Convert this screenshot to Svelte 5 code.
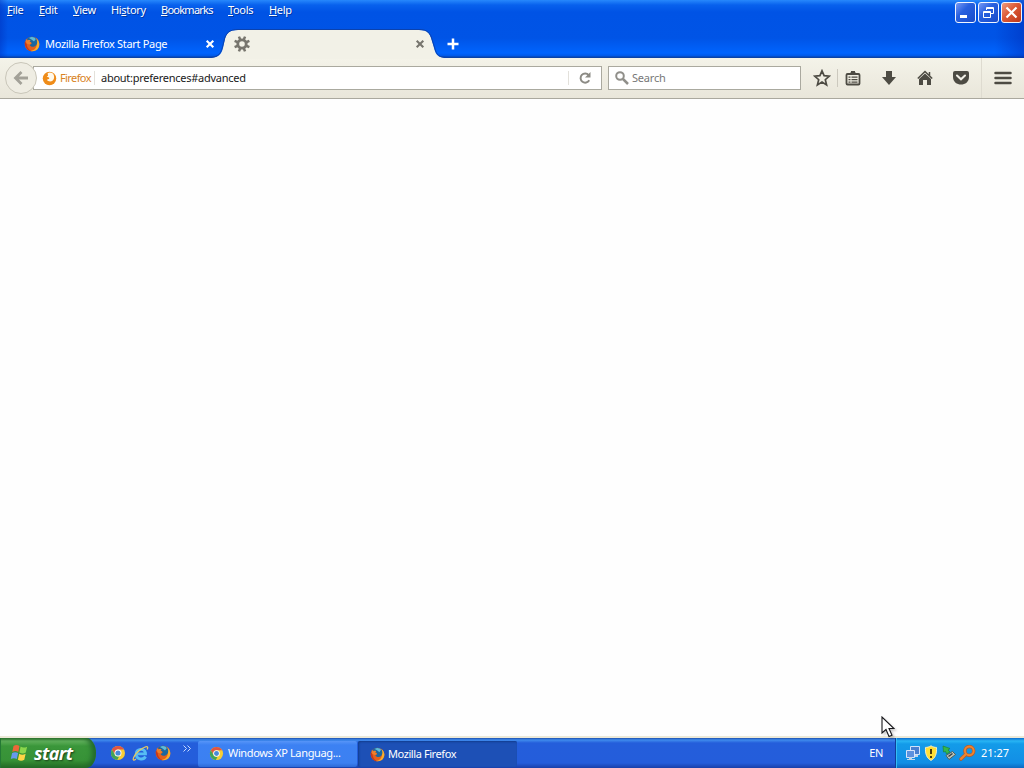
<script lang="ts">
	const menus = [
		{ before: '', key: 'F', after: 'ile', width: 32 },
		{ before: '', key: 'E', after: 'dit', width: 34 },
		{ before: '', key: 'V', after: 'iew', width: 38 },
		{ before: 'Hi', key: 's', after: 'tory', width: 50 },
		{ before: '', key: 'B', after: 'ookmarks', width: 67 },
		{ before: '', key: 'T', after: 'ools', width: 41 },
		{ before: '', key: 'H', after: 'elp', width: 40 }
	];

	let url = $state('about:preferences#advanced');
	let search = $state('');
</script>

{#snippet firefox(size: number)}
	<svg class="icon" width={size} height={size} viewBox="0 0 16 16">
		<circle cx="8" cy="8" r="7.3" fill="#e4601c" />
		<path d="M12 2.2c4.5 3 4.300 9.500.2 12-2.200 1.300-4.500 1.300-6 .8 4-.4 6.300-3 6.600-6.500z" fill="#f8ae2c" />
		<path d="M.8 6C.5 11 3.500 14.800 7.500 15.300 4.500 13.500 2.500 11 2.600 7z" fill="#c5371d" />
		<path d="M3 2.800C6-.2 11 .2 12.600 3.500c1.300 3 .4 6-2.200 7-2.200.8-4-.1-4.700-1.600l2-1.200L7 6 4 5.500z" fill="#1b679f" />
		<path d="M5 2C7.500.3 10.500 1 11.800 3L10 5.500 7.500 3.500z" fill="#5fbad8" />
		<path d="m1.800 3 1.500 1.500c1-.7 2.500-.5 3.300 0L5.500 6c1.500 0 2 .9 1.200 1.600l-1.300.9-3-1z" fill="#ef802a" />
	</svg>
{/snippet}

{#snippet chrome(size: number)}
	<svg class="icon" width={size} height={size} viewBox="0 0 16 16">
		<circle cx="8" cy="8" r="7" fill="#f5ce35" />
		<path d="M1.9 4.500A7 7 0 0 1 14.100 4.500H8a3.500 3.500 0 0 0-3.100 5z" fill="#df5545" />
		<path d="M1.900 4.500 5 9.800a3.500 3.500 0 0 0 4.200 1.500L7.300 15A7 7 0 0 1 1.900 4.500z" fill="#42a35b" />
		<circle cx="8" cy="8" r="3.500" fill="#fff" />
		<circle cx="8" cy="8" r="2.600" fill="#4a8ad8" />
	</svg>
{/snippet}

{#snippet cross()}
	<svg class="icon" width="10" height="10" viewBox="0 0 10 10">
		<path d="m1.700 1.700 6.600 6.600m0-6.600-6.600 6.600" fill="none" stroke="currentColor" stroke-width="2.100" />
	</svg>
{/snippet}

<div class="desktop">
	<header class="titlebar">
		<div class="top-row">
			<nav>
				{#each menus as menu}
					<span class="menu" style="width: {menu.width}px">{menu.before}<u>{menu.key}</u>{menu.after}</span>
				{/each}
			</nav>
			<div class="window-controls">
				<button aria-label="Minimize">
					<svg width="19" height="19" viewBox="0 0 19 19"><path d="M4 13.500h7" stroke="#fff" stroke-width="3" /></svg>
				</button>
				<button aria-label="Restore">
					<svg width="19" height="19" viewBox="0 0 19 19" fill="none" stroke="#fff">
						<path d="M7.500 7V4.500h7v6H12M7.500 5.500h7M4.500 8.500h7v6h-7zM4.500 9.500h7" />
					</svg>
				</button>
				<button class="close" aria-label="Close">
					<svg width="19" height="19" viewBox="0 0 19 19"><path d="m4.500 4.500 10 10m0-10-10 10" stroke="#fff" stroke-width="2.200" /></svg>
				</button>
			</div>
		</div>
		<div class="tabs">
			<div class="tab">
				{@render firefox(16)}
				<span class="tab-title">Mozilla Firefox Start Page</span>
				{@render cross()}
			</div>
			<div class="tab active">
				<svg class="shape" width="240" height="30" viewBox="0 0 240 30">
					<path d="M0 29C9 29 13 27 15 19L16.500 12C18 4 22 1 30 1H211C219 1 222 4 224 12L226 19C228 27 231 29 240 29V30H0z" fill="#f2f1e7" />
					<path d="M0 28.500C9 28.500 12.500 26 14.500 18L16 12C17.500 3.500 22 .5 30 .5H211C219 .5 222.500 3.500 224.500 12L226.500 18C228.500 26.500 231 28.500 240 28.500" fill="none" stroke="#0b42ae" />
				</svg>
				<svg class="icon gear" width="16" height="16" viewBox="0 0 16 16">
					<circle cx="8" cy="8" r="4.200" fill="none" stroke="#77756e" stroke-width="2.800" />
					<g stroke="#77756e" stroke-width="2.500">
						{#each [0, 45, 90, 135, 180, 225, 270, 315] as angle}
							<path d="M8 0v3.500" transform="rotate({angle + 22.5} 8 8)" />
						{/each}
					</g>
				</svg>
				{@render cross()}
			</div>
			<svg class="new-tab" width="12" height="12" viewBox="0 0 12 12">
				<path d="M6 .5v11M.5 6h11" stroke="#fff" stroke-width="2.500" />
			</svg>
		</div>
	</header>

	<div class="toolbar">
		<button class="back" aria-label="Back">
			<svg width="18" height="18" viewBox="0 0 18 18" fill="none" stroke="#a3a198" stroke-width="2.800">
				<path d="M16 9H4m5.500-6L3.500 9l6 6" />
			</svg>
		</button>
		<div class="address">
			<svg class="icon" width="15" height="15" viewBox="0 0 16 16">
				<circle cx="8" cy="8" r="7.200" fill="#ef8c19" />
				<path d="M6 2.500c2-1.500 5-.8 6.300 1.200 1 2 .9 4.800-.8 6.300-2 1.800-5.300 1.200-6.300-.7l2.500-1L7.500 7 5 6l1.500-1z" fill="#fff9ec" />
			</svg>
			<span class="identity">Firefox</span>
			<input class="url" aria-label="Address" bind:value={url} />
			<button class="reload" aria-label="Reload">
				<svg width="14" height="14" viewBox="0 0 14 14">
					<path d="M11.200 9.300a4.600 4.600 0 1 1-.5-5.200" fill="none" stroke="#8c8b85" stroke-width="2" />
					<path d="M12.500 1v5.500H7z" fill="#8c8b85" />
				</svg>
			</button>
		</div>
		<div class="search">
			<svg class="icon" width="14" height="14" viewBox="0 0 14 14" fill="none" stroke="#908f8a">
				<circle cx="5" cy="5" r="3.800" stroke-width="2" />
				<path d="m8 8 5 5" stroke-width="2.500" />
			</svg>
			<input aria-label="Search" placeholder="Search" bind:value={search} />
		</div>
		<div class="actions">
			<button aria-label="Bookmark">
				<svg width="18" height="18" viewBox="0 0 18 18">
					<path d="m9 1.800 2.100 4.900 5.200.5-4 3.500 1.300 5.200L9 13.100l-4.600 2.800 1.300-5.200-4-3.500 5.200-.5z" fill="none" stroke="#4d4b43" stroke-width="1.700" />
				</svg>
			</button>
			<button class="list" aria-label="Bookmarks">
				<svg width="16" height="16" viewBox="0 0 16 16">
					<path d="M2.500 4h11q1 0 1 1v8.500q0 1-1 1h-11q-1 0-1-1V5q0-1 1-1z" fill="none" stroke="#4d4b43" stroke-width="1.800" />
					<path d="M4 4.500 6 2V1h4v1l2 2.500z" fill="#4d4b43" />
					<path d="M3.500 7.200h2m1 0h6m-9 2.500h2m1 0h6m-9 2.500h2m1 0h6" stroke="#4d4b43" stroke-width="1.300" />
				</svg>
			</button>
			<button aria-label="Downloads">
				<svg width="16" height="16" viewBox="0 0 16 16"><path d="M5 1h6v6h4l-7 8-7-8h4z" fill="#4d4b43" /></svg>
			</button>
			<button aria-label="Home">
				<svg width="16" height="16" viewBox="0 0 16 16" fill="#4d4b43">
					<path d="M8 3.500 14 9v6h-4v-5H6v5H2V9z" />
					<path d="m.8 8.500 7.200-7 7.200 7M12.500 2v4" fill="none" stroke="#4d4b43" stroke-width="1.500" />
				</svg>
			</button>
			<button aria-label="Pocket">
				<svg width="18" height="16" viewBox="0 0 18 16">
					<path d="M3 1h12q2 0 2 2v4c0 10-16 10-16 0V3q0-2 2-2z" fill="#4d4b43" />
					<path d="m5 5.500 4 3.800 4-3.800" fill="none" stroke="#f2f0e7" stroke-width="2.100" stroke-linecap="round" />
				</svg>
			</button>
			<button class="hamburger" aria-label="Open menu">
				<svg width="18" height="14" viewBox="0 0 18 14"><path d="M1.500 2h15m-15 5h15m-15 5h15" stroke="#4d4b43" stroke-width="2.500" stroke-linecap="round" /></svg>
			</button>
		</div>
	</div>

	<main></main>

	<footer class="taskbar">
		<button class="start">
			<svg width="20" height="20" viewBox="0 0 20 20">
				<path d="M3.500 3c2-1.200 4-1.200 6 .1L8.300 9c-2-1.300-4-1.300-6 0z" fill="#ed6739" />
				<path d="M10.600 3.600c2 1.300 4 1.300 6.500.1L15.800 9.600c-2.200 1.200-4.300 1.100-6.400-.1z" fill="#8bd64c" />
				<path d="M2.100 10.100c2-1.200 4-1.200 6 0l-1.300 6c-2-1.300-4-1.300-6 0z" fill="#6799ee" />
				<path d="M9.200 10.700c2.100 1.300 4.200 1.300 6.400.1l-1.300 6c-2.300 1.200-4.400 1.100-6.400-.1z" fill="#ffd446" />
			</svg>
			<span>start</span>
		</button>
		<div class="quick">
			{@render chrome(16)}
			<svg class="icon" width="17" height="17" viewBox="0 0 17 17" fill="none">
				<path d="M13.500 11.500c-2 4-9.500 3-9.300-2.500C4.400 3.600 12 2.500 13.500 7.800v1H5" stroke="#56bdf4" stroke-width="2.800" />
				<path d="M4 14c-5 4-3-4 4-9s9-4 7-.5" stroke="#e7c861" stroke-width="1.300" />
			</svg>
			{@render firefox(16)}
		</div>
		<svg class="chevrons" width="8" height="7" viewBox="0 0 8 7"><path d="m.5.5 3 3-3 3m4-6 3 3-3 3" fill="none" stroke="#c7dbff" /></svg>
		<button class="task">
			{@render chrome(15)}
			<span>Windows XP Languag...</span>
		</button>
		<button class="task pressed">
			{@render firefox(15)}
			<span>Mozilla Firefox</span>
		</button>
		<span class="language">EN</span>
		<div class="tray">
			<svg width="16" height="16" viewBox="0 0 16 16">
				<path d="M5.500 1.500h9v8h-9z" fill="#477fd0" stroke="#cfe2fa" />
				<path d="M1.500 5.500h8v7h-8z" fill="#5c91de" stroke="#d7e5fb" />
				<path d="M4 12h3v2h3v1H2v-1h2zM10 10h3v2h-3z" fill="#c1d7e9" />
			</svg>
			<svg width="16" height="16" viewBox="0 0 16 16">
				<path d="M8 .8c2 1.400 4 1.600 5.500 1.600.5 6.600-1.500 11-5.500 13C4 13.400 2 9 2.500 2.400 4 2.400 6 2.200 8 .8z" fill="#ffdf36" stroke="#f2edc6" />
				<path d="M8 4v5m0 2v2" stroke="#4d3b0b" stroke-width="2" />
			</svg>
			<svg width="16" height="16" viewBox="0 0 16 16">
				<path d="m5 10.500 6.500-4 3 3-6.500 5z" fill="#bcc5bd" stroke="#4f605b" />
				<path d="m7.500 11.500 4-3" stroke="#333e40" stroke-width="1.500" />
				<path d="m2 1 7 2.500-2 1.500 2 2-3.500 2-1-2.500-2 .5z" fill="#34b84b" stroke="#20823b" stroke-width=".7" />
			</svg>
			<svg width="17" height="16" viewBox="0 0 17 16" fill="none">
				<circle cx="10.300" cy="6" r="4.400" stroke="#b95b24" stroke-width="3.400" />
				<path d="m6.500 9.800-4.500 4.200" stroke="#b95b24" stroke-width="3.600" stroke-linecap="round" />
				<circle cx="10.300" cy="5.800" r="4.400" stroke="#ee842f" stroke-width="2" />
				<path d="m6.500 9.500-4.500 4.400" stroke="#ee842f" stroke-width="2.200" stroke-linecap="round" />
			</svg>
			<span class="clock">21:27</span>
		</div>
	</footer>

	<svg class="cursor" width="14" height="23" viewBox="0 0 14 23">
		<path d="M1 1v16l4-3.500 3 7 3-1.300-3-6.700h5z" fill="#fff" stroke="#17171b" stroke-width="1.100" />
	</svg>
</div>

<style>
	:global(body) {
		overflow: hidden;
	}

	.desktop {
		position: relative;
		display: flex;
		flex-direction: column;
		width: 1024px;
		height: 768px;
		background: #fefefe;
		font: 11px/14px Tahoma, 'Noto Sans', sans-serif;
		letter-spacing: -0.32px;
	}

	button,
	input {
		padding: 0;
		border: 0;
		background: none;
		font: inherit;
		letter-spacing: inherit;
	}

	button {
		display: flex;
		align-items: center;
		justify-content: center;
	}

	input {
		min-width: 0;
		outline: 0;
	}

	svg {
		display: block;
		flex: none;
	}

	.titlebar {
		height: 58px;
		color: #fff;
		background:
			linear-gradient(90deg, #0029b366, transparent 8px, transparent 995px, #0029b377),
			linear-gradient(#2788fc 0, #0861ed 5px, #0053e5 12px, #0054e6 38px, #0064fe 53px, #0058e6 56px, #0a43a8 57px);
	}

	.top-row {
		display: flex;
		justify-content: space-between;
		height: 30px;
	}

	nav {
		display: flex;
		padding: 3px 0 0 7px;
		text-shadow: 1px 1px #0038a5;
	}

	.menu {
		white-space: nowrap;
	}

	.menu:nth-child(5) {
		letter-spacing: -0.75px;
	}

	.menu u {
		text-underline-offset: 1px;
	}

	.window-controls {
		display: flex;
		gap: 2px;
		padding: 2px 2px 0 0;
	}

	.window-controls button {
		box-sizing: border-box;
		width: 21px;
		height: 21px;
		border: 1px solid #f1f5ff;
		border-radius: 3px;
		background: linear-gradient(135deg, #7899f5, #2860df 40%, #184bca);
	}

	.window-controls .close {
		background: linear-gradient(135deg, #ee9b80, #dc5935 45%, #bd371b);
	}

	.tabs {
		display: flex;
		height: 28px;
	}

	.tab {
		position: relative;
		display: flex;
		align-items: center;
		box-sizing: border-box;
		width: 215px;
		padding-left: 24px;
	}

	.tab-title {
		width: 160px;
		padding-left: 5px;
	}

	.tab.active {
		width: 220px;
		padding-left: 18px;
		color: #77756e;
	}

	.shape {
		position: absolute;
		left: -7px;
		top: -1px;
	}

	.gear {
		position: relative;
		left: 1px;
	}

	.active .gear + :global(svg) {
		position: relative;
		margin-left: 166px;
	}

	.new-tab {
		margin: 8px 0 0 12px;
	}

	.toolbar {
		display: flex;
		align-items: center;
		box-sizing: border-box;
		height: 41px;
		padding-left: 5px;
		border-bottom: 1px solid #aaa89e;
		background: linear-gradient(#f4f3e9, #e9e6da);
	}

	.back {
		position: relative;
		box-sizing: border-box;
		width: 32px;
		height: 32px;
		border: 1px solid #c9c6b9;
		border-radius: 50%;
		background: #efede3;
	}

	.address,
	.search {
		display: flex;
		align-items: center;
		box-sizing: border-box;
		height: 24px;
		border: 1px solid #aaa99f;
		background: #fff;
	}

	.address {
		width: 569px;
		margin-left: -4px;
		padding-left: 8px;
	}

	.identity {
		width: 34px;
		padding-left: 3px;
		border-right: 1px solid #e3e1db;
		color: #d98323;
		letter-spacing: -0.6px;
	}

	.url {
		flex: 1;
		padding-left: 6px;
		color: #191919;
		letter-spacing: -0.26px;
	}

	.reload {
		width: 33px;
		height: 14px;
		padding-right: 1px;
		border-left: 1px solid #e3e1db;
	}

	.search {
		width: 193px;
		margin-left: 6px;
		padding-left: 6px;
	}

	.search input {
		margin-left: 3px;
		letter-spacing: -0.2px;
	}

	.search input::placeholder {
		color: #777;
		opacity: 1;
	}

	.actions {
		display: flex;
		height: 100%;
		margin-left: 3px;
	}

	.actions button {
		width: 36px;
	}

	.actions .list {
		width: 31px;
		height: 18px;
		align-self: center;
		margin-right: 3px;
		border-left: 1px solid #ccc9be;
	}

	.actions button:first-child {
		width: 33px;
		padding-left: 3px;
		box-sizing: border-box;
	}

	.actions .hamburger {
		width: 42px;
		margin-left: 2px;
		border-left: 1px solid #dedbd0;
	}

	main {
		flex: 1;
	}

	.taskbar {
		display: flex;
		box-sizing: border-box;
		height: 32px;
		border-top: 2px solid #ece9d8;
		color: #fff;
		background: linear-gradient(#1d4eae 0, #3f8bed 2px, #245edb 5px, #245ddb 25px, #193fa9 30px);
	}

	.start {
		width: 96px;
		justify-content: flex-start;
		gap: 4px;
		padding: 0 0 1px 10px;
		border-radius: 0 12px 12px 0 / 0 18px 18px 0;
		color: #fff;
		background: linear-gradient(#31772f 0, #62b25d 3px, #3a963a 8px, #379237 22px, #246c24 30px);
		box-shadow: inset -4px 0 5px #236a2c, inset 1px 0 #257a36;
		font: italic bold 18px 'Open Sans', sans-serif;
		letter-spacing: -0.6px;
		text-shadow: 1px 1px 2px #183d17;
	}

	.quick {
		display: flex;
		align-items: center;
		gap: 6px;
		padding-left: 14px;
	}

	.chevrons {
		margin: 7px 7px 0 12px;
	}

	.task {
		box-sizing: border-box;
		width: 159px;
		height: 26px;
		margin-top: 3px;
		justify-content: flex-start;
		gap: 4px;
		padding: 0 0 2px 11px;
		border-radius: 2px;
		color: #fff;
		background: linear-gradient(#5795f8, #3c81f3 4px, #3c80f1 22px, #2e69d6);
		letter-spacing: -0.35px;
		white-space: nowrap;
	}

	.task.pressed {
		margin-left: 1px;
		padding: 0 0 0 12px;
		background: #1d50b6;
		box-shadow: inset 1px 1px 2px #123c8d;
		gap: 3px;
		letter-spacing: -0.42px;
	}

	.language {
		margin: 8px 12px 0 auto;
	}

	.tray {
		display: flex;
		align-items: center;
		gap: 2px;
		box-sizing: border-box;
		width: 129px;
		padding-left: 9px;
		border-left: 1px solid #103f99;
		background: linear-gradient(#0c6cce 0, #28b5f4 3px, #139be9 6px, #128ee5 25px, #0d68c0 30px);
		box-shadow: inset 1px 0 #35bdf5;
	}

	.clock {
		margin-left: 3px;
		letter-spacing: 0;
	}

	.cursor {
		position: absolute;
		left: 881px;
		top: 716px;
		filter: drop-shadow(2px 2px 1px #0003);
	}
</style>
